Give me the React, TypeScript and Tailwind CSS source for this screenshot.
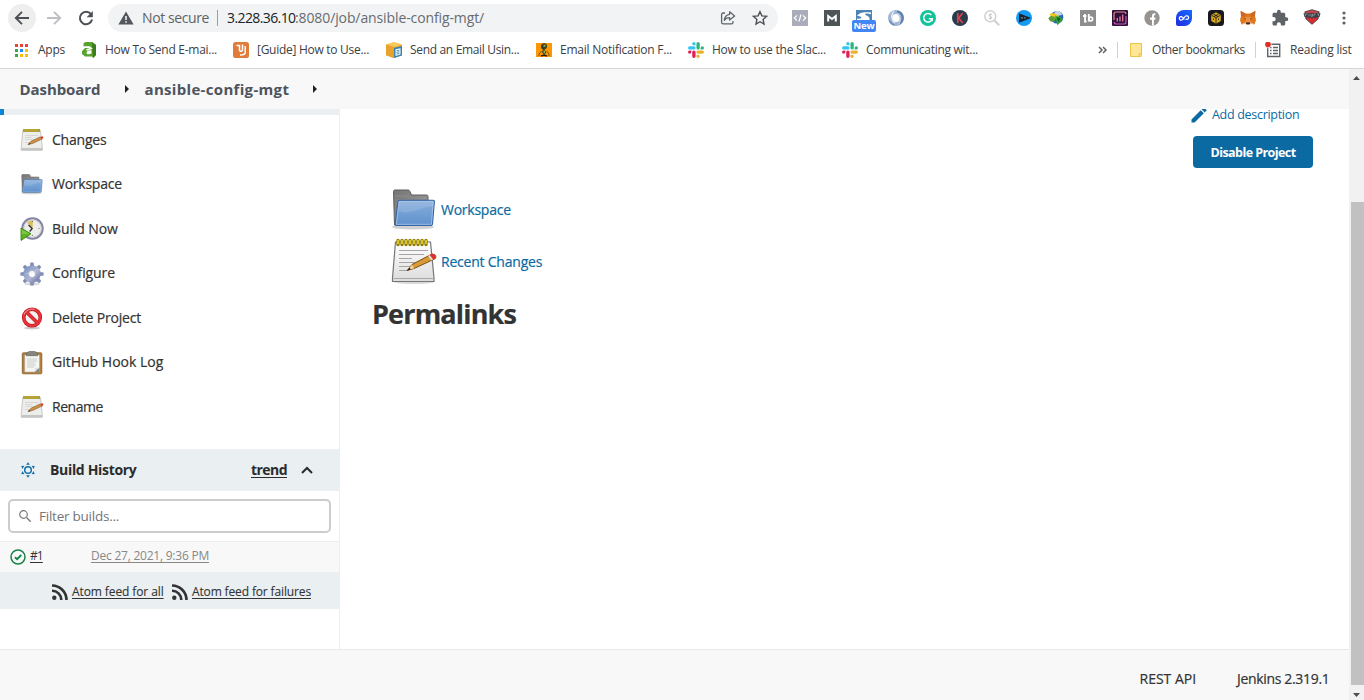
import React from "react";

type IconProps = { className?: string };

const font = "font-['Open_Sans','Noto_Sans',sans-serif]";

/* ---------- browser chrome icons ---------- */

const Back = () => (
  <svg width="16" height="16" viewBox="0 0 16 16" fill="none" stroke="#4c4f54" strokeWidth="1.9">
    <path d="M15 8H2.5M8 1.8 1.8 8 8 14.2" />
  </svg>
);
const Forward = () => (
  <svg width="16" height="16" viewBox="0 0 16 16" fill="none" stroke="#bdbfc2" strokeWidth="1.9">
    <path d="M1 8h12.5M8 1.8 14.2 8 8 14.2" />
  </svg>
);
const Reload = () => (
  <svg width="16" height="16" viewBox="0 0 16 16">
    <path d="M13 4.2A6.2 6.2 0 1 0 14.1 9.6" fill="none" stroke="#4c4f54" strokeWidth="2" />
    <path d="M14.8 1v6.2H8.6z" fill="#4c4f54" />
  </svg>
);
const Warning = () => (
  <svg width="16" height="14" viewBox="0 0 16 14">
    <path d="M8 .5 15.6 13.5H.4z" fill="#54575b" />
    <path d="M7.2 5h1.6v4H7.2zM7.2 10.2h1.6v1.6H7.2z" fill="#f1f3f4" />
  </svg>
);
const Share = () => (
  <svg width="16" height="16" viewBox="0 0 16 16" fill="none" stroke="#5f6368" strokeWidth="1.3" strokeLinejoin="round">
    <path d="M5 3H3.2C2.2 3 1.6 3.6 1.6 4.6v7.6c0 1 .6 1.6 1.6 1.6h8.2c1 0 1.6-.6 1.6-1.6V11" />
    <path d="M9.6 1.8 14.6 6l-5 4.1V7.7C7 7.7 5.4 8.6 4.3 10.4 4.6 7 6.4 4.700 9.6 4.300z" />
  </svg>
);
const Star = () => (
  <svg width="16" height="16" viewBox="0 0 16 16" fill="none" stroke="#4c4f54" strokeWidth="1.4">
    <path d="m8 1.700 1.900 4.200 4.600.5-3.400 3.100.9 4.500L8 11.700 4 14l.9-4.500L1.500 6.400l4.600-.5z" />
  </svg>
);

const CodeExt = () => (
  <svg width="16" height="16" viewBox="0 0 16 16">
    <rect width="16" height="16" fill="#a9adba" />
    <path d="M5 5.300 2.300 8 5 10.700M11 5.300 13.700 8 11 10.700M9 4.500 7 11.500" fill="none" stroke="#fff" strokeWidth="1.200" />
  </svg>
);
const MExt = () => (
  <svg width="16" height="16" viewBox="0 0 16 16">
    <rect width="16" height="16" fill="#4d5557" />
    <path d="M4.200 11.500V6L8 9l3.800-3v5.500" fill="none" stroke="#fff" strokeWidth="2" />
  </svg>
);
const WaveExt = () => (
  <svg width="16" height="16" viewBox="0 0 16 16">
    <rect width="16" height="16" fill="#4e84b5" />
    <path d="M1 6C3 3 7 1.500 15 2.500v1.800C11 3 8 3.500 9.500 5c2.500 1 4.500 2 4 5H1V8.500c3 .5 5 0 4-1.500-1-.7-2.500-1-4-1z" fill="#fff" />
  </svg>
);
const SwirlExt = () => (
  <svg width="16" height="16" viewBox="0 0 16 16" fill="none">
    <circle cx="8" cy="8" r="6" stroke="#9fb5d3" strokeWidth="4" />
    <path d="M9 1.500A6.500 6.500 0 0 1 10.500 14" stroke="#6080ac" strokeWidth="2.200" />
    <path d="M6 1.200C2.500 4.500 3 10 7 12.800" stroke="#dfe8f4" strokeWidth="1.500" />
    <path d="M10.500 14.500C13 11 12.500 6 9 3.300" stroke="#c8d6ea" strokeWidth="1.300" />
    <path d="M1.500 10.500A7 7 0 0 0 6.500 15" stroke="#6c8bb5" strokeWidth="1.400" />
  </svg>
);
const GrammarExt = () => (
  <svg width="16" height="16" viewBox="0 0 16 16">
    <circle cx="8" cy="8" r="8" fill="#15c39a" />
    <path d="M11.300 5A4.300 4.300 0 1 0 12.200 8.700H8.800M12.200 8.500V11.300" fill="none" stroke="#fff" strokeWidth="1.500" />
  </svg>
);
const KExt = () => (
  <svg width="16" height="16" viewBox="0 0 16 16">
    <circle cx="8" cy="8" r="8" fill="#2a3b4c" />
    <path d="M5.800 3v10M10.700 3 6.700 8l4 5" fill="none" stroke="#d9444a" strokeWidth="1.700" />
  </svg>
);
const MoneySearchExt = () => (
  <svg width="16" height="16" viewBox="0 0 16 16" fill="none" stroke="#cfcfcf">
    <circle cx="6.300" cy="6.300" r="5.500" strokeWidth="1.400" />
    <path d="m10.500 10.500 4.700 4.700" strokeWidth="2" />
    <path d="M8 4.600C6 3.300 4.300 5.200 6 6.200c2.600.8 2 3.200-1.500 2M6.300 3v6.700" strokeWidth="1.100" />
  </svg>
);
const PlayExt = () => (
  <svg width="16" height="16" viewBox="0 0 16 16">
    <circle cx="8" cy="8" r="8" fill="#149bf3" />
    <path d="M3 3.300 15 8 3 12.700z" fill="#15242f" />
    <path d="M5 7h2v1.700H5zM8 7h1.500v1.700H8z" fill="#55707f" />
  </svg>
);
const GlobeExt = () => (
  <svg width="16" height="16" viewBox="0 0 16 16">
    <circle cx="9" cy="7.300" r="6.300" fill="#2768b3" />
    <path d="M7 1.500C10 0 14 2 14 5L9 6 6 4z" fill="#c5d5e5" />
    <path d="M1.500 4.500C4 2 8 3 11 7L6 9z" fill="#f5c51c" />
    <path d="M.5 8.500C2 5 5 5.500 8 8l-2 4C3 12 1 11 .5 8.500z" fill="#5f9d36" />
    <path d="M7 5.500 15 8.500 9.500 15.500z" fill="#30a52c" />
    <path d="m9 7 3.500 1.700L10 12z" fill="#175a18" />
  </svg>
);
const TbExt = () => (
  <svg width="16" height="16" viewBox="0 0 16 16">
    <rect width="16" height="16" fill="#8e8e8e" />
    <path d="M5 4v7.500h1.500M3 6h3.500M8.800 4v7.500" fill="none" stroke="#fff" strokeWidth="1.800" />
    <circle cx="10.700" cy="9" r="1.900" fill="none" stroke="#fff" strokeWidth="1.600" />
  </svg>
);
const ChartExt = () => (
  <svg width="16" height="16" viewBox="0 0 16 16" fill="none">
    <rect width="16" height="16" rx="1" fill="#30123f" />
    <path d="M13.800 4V3.500c0-1-.5-1.500-1.500-1.500H4C2.800 2 2 2.800 2 4v6" stroke="#e78c83" strokeWidth="1.200" />
    <path d="M2.200 12c0 1.200.7 2 1.800 2h8c1.200 0 2-.8 2-2V6" stroke="#c559b0" strokeWidth="1.200" />
    <path d="M5.300 8v3.500M8 6.500v5M10.700 4.500v7" stroke="#db7599" strokeWidth="1.400" />
  </svg>
);
const FExt = () => (
  <svg width="16" height="16" viewBox="0 0 16 16">
    <circle cx="8" cy="8" r="7.700" fill="#969391" />
    <path d="M8 15.500V9.700H6V7.500h2V6c0-2 1-3 3.300-2.700v1.900C10 5 9.900 5.400 9.900 6.200v1.300h1.600l-.3 2.200H9.900v5.600z" fill="#fff" />
  </svg>
);
const LoopExt = () => (
  <svg width="16" height="16" viewBox="0 0 16 16">
    <defs>
      <linearGradient id="loop" x1="0" y1="1" x2="1" y2="0"><stop stopColor="#202bde" /><stop offset="1" stopColor="#176cff" /></linearGradient>
    </defs>
    <path d="M8 0h8v8.500A7.500 7.500 0 0 1 8.500 16H2a2 2 0 0 1-2-2V8a8 8 0 0 1 8-8z" fill="url(#loop)" />
    <path d="M8.300 9.500 6.600 7.300C5.500 6 3.300 6.500 3.300 8.300c0 2 2.200 2.400 3.300 1L9 6.600c1.200-1.500 3.600-.9 3.600 1 0 1.700-1.900 2.400-3 1.200" fill="none" stroke="#fff" strokeWidth="1.200" />
  </svg>
);
const CubeExt = () => (
  <svg width="16" height="16" viewBox="0 0 16 16">
    <rect width="16" height="16" rx="3.500" fill="#17191e" />
    <path d="m8 2.300 4.800 2.600v6L8 13.700l-4.800-2.800v-6z" fill="#d7a619" />
    <path d="M8 7v7M3.500 5.300 8 7.600l4.500-2.300M5.600 4.200l4.800 2.500M10.400 4.200 5.600 6.700M5.500 8.500v1.500M10.500 8.500v1.500" stroke="#17191e" strokeWidth=".8" fill="none" />
  </svg>
);
const FoxExt = () => (
  <svg width="16" height="16" viewBox="0 0 16 16">
    <path d="m.5.800 5.300 2.700h4.400L15.500.800 15 6l1 4-1.500 4.500-4-1-1 1h-3l-1-1-4 1L0 10l1-4z" fill="#e2761b" />
    <path d="m.8 1 5 3.300L5 7 1 6zM15.200 1l-5 3.300L11 7l4-1z" fill="#c8682a" />
    <path d="M5 7h6l-1 5H6z" fill="#ef9044" />
    <path d="m4 8.300 2 .2-.3 1zM12 8.300l-2 .2.3 1z" fill="#233447" />
    <path d="M6.300 12.500h3.400l.2 1.800H6.100z" fill="#322a2a" />
    <path d="m2 14 3.500-2 .5 2zM14 14l-3.500-2-.5 2z" fill="#d5bfb2" />
  </svg>
);
const PuzzleExt = () => (
  <svg width="18" height="18" viewBox="0 0 24 24" fill="#5f6368">
    <path d="M20.500 11H19V7c0-1.100-.9-2-2-2h-4V3.500a2.500 2.500 0 0 0-5 0V5H4c-1.100 0-1.990.9-1.990 2v3.800H3.500c1.490 0 2.700 1.210 2.700 2.700s-1.210 2.700-2.700 2.700H2V20c0 1.100.9 2 2 2h3.800v-1.500c0-1.490 1.210-2.700 2.700-2.700s2.700 1.210 2.700 2.700V22H17c1.100 0 2-.9 2-2v-4h1.500a2.500 2.500 0 0 0 0-5z" />
  </svg>
);
const ShieldExt = () => (
  <svg className="mb-[3px]" width="18" height="16" viewBox="0 0 18 16">
    <path d="M1.500 2.500 9 .3l7.500 2.200-1 7.500L9 15.800 2.500 10z" fill="#3c4349" />
    <path d="m3 8 6 1.300L15 8l-1 2.700L9 15l-5-4.300z" fill="#d22f35" />
    <path d="M3 2.800 9 1l6 1.800v1.500H3z" fill="#c9454a" />
    <path d="M.5 4.300h17L16.500 8 9 8.800 1.500 8z" fill="#394047" />
    <path d="M2.500 7V5h2M6 7.300V5M8 5v2.300h1.500V5M11 7.300V5h1.500M14 5h1.500v2" stroke="#a7abb0" strokeWidth=".7" fill="none" />
  </svg>
);

const extensions: React.FC[] = [
  CodeExt, MExt, WaveExt, SwirlExt, GrammarExt, KExt, MoneySearchExt, PlayExt, GlobeExt,
  TbExt, ChartExt, FExt, LoopExt, CubeExt, FoxExt, PuzzleExt, ShieldExt,
];

/* ---------- bookmark icons ---------- */

const AppsGrid = () => {
  const colors = ["#ea4335", "#ea4335", "#ea4335", "#34a853", "#1a8cff", "#fbbc04", "#34a853", "#fbbc04", "#fbbc04"];
  return (
    <svg width="13" height="13" viewBox="0 0 13 13">
      {colors.map((c, i) => (
        <rect key={i} x={(i % 3) * 5} y={Math.floor(i / 3) * 5} width="3" height="3" fill={c} />
      ))}
    </svg>
  );
};
const GreenTwo = () => (
  <svg width="16" height="16" viewBox="0 0 16 16">
    <path d="M1.500 1.200 3.500 0h6.800L14 3v10l-3 3-1-1.500H3L0 12V9l3-3H1.500z" fill="#57a32b" />
    <path d="M10 .5 14 3v10l-3 3z" fill="#3a7d1c" />
    <path d="M1 5.200h6.500L9 6.500 4.500 8" fill="none" stroke="#fff" strokeWidth="1.800" />
    <path d="M9.500 8.500C7 8 4.500 9 4.500 10.700s2.500 2 5 .8z" fill="#fff" />
  </svg>
);
const OrangeGuide = () => (
  <svg width="16" height="16" viewBox="0 0 16 16">
    <rect width="16" height="16" rx="2.500" fill="#e07b39" />
    <path d="M3.500 3.500h3v5.300M9.500 2.500v5.800c0 .8-.8 1-3 1M12.200 4v6.500c0 1.800-1 2.500-5.200 2.500" fill="none" stroke="#fff" strokeWidth="1.500" />
  </svg>
);
const BoxIcon = () => (
  <svg width="16" height="16" viewBox="0 0 16 16">
    <path d="m0 2.500 8-2.300 8 2.300v10.700L8 16l-8-2.800z" fill="#f2b02f" />
    <path d="m0 2.500 8-2.300 8 2.300-8 2.600z" fill="#f8c95d" />
    <path d="M0 2.500 8 5v11l-8-2.800z" fill="#e9a22b" />
    <path d="m8 5.800 8-1.800v9.500L8 16z" fill="#3883ae" />
    <path d="m9.500 7.300 5-1v6.200l-5 1.500z" fill="#fff" />
    <path d="m10.500 8.700 3-.6M10.500 10.400l3-.6M10.500 12.100l3-.7" stroke="#3883ae" strokeWidth=".9" />
  </svg>
);
const BugIcon = () => (
  <svg width="16" height="16" viewBox="0 0 16 16">
    <rect y="1" width="16" height="14" fill="#ff9800" />
    <path d="m5.500 9-2.500 3v2M10.500 9l2.500 3v2" stroke="#7b5313" strokeWidth="1" fill="none" />
    <path d="M5 4.500C5 2.500 6.500 1.300 8.300 1.300s2.700 1.200 2.700 3-1 2.700-2.500 3l1.700 3.200L8 13.500 6 10l1-2.500C5.500 7 5 6 5 4.500z" fill="#33401d" />
    <path d="M7.500 2.700h2v2h-2zM7.500 8.500H9v2.700H7.500z" fill="#91b456" />
    <path d="M5 14.300c1-1.300 5-1.300 6 0" stroke="#1e1a0d" strokeWidth="1.400" fill="none" />
  </svg>
);
const Slack = () => (
  <svg width="16" height="16" viewBox="0 0 24 24">
    <path d="M5.042 15.165a2.528 2.528 0 0 1-2.520 2.523A2.528 2.528 0 0 1 0 15.165a2.527 2.527 0 0 1 2.522-2.520h2.520v2.520zM6.313 15.165a2.527 2.527 0 0 1 2.521-2.520 2.527 2.527 0 0 1 2.521 2.520v6.313A2.528 2.528 0 0 1 8.834 24a2.528 2.528 0 0 1-2.521-2.522v-6.313z" fill="#e01e5a" />
    <path d="M8.834 5.042a2.528 2.528 0 0 1-2.521-2.520A2.528 2.528 0 0 1 8.834 0a2.528 2.528 0 0 1 2.521 2.522v2.520H8.834zM8.834 6.313a2.528 2.528 0 0 1 2.521 2.521 2.528 2.528 0 0 1-2.521 2.521H2.522A2.528 2.528 0 0 1 0 8.834a2.528 2.528 0 0 1 2.522-2.521h6.312z" fill="#36c5f0" />
    <path d="M18.956 8.834a2.528 2.528 0 0 1 2.522-2.521A2.528 2.528 0 0 1 24 8.834a2.528 2.528 0 0 1-2.522 2.521h-2.522V8.834zM17.688 8.834a2.528 2.528 0 0 1-2.523 2.521 2.527 2.527 0 0 1-2.520-2.521V2.522A2.527 2.527 0 0 1 15.165 0a2.528 2.528 0 0 1 2.523 2.522v6.312z" fill="#2eb67d" />
    <path d="M15.165 18.956a2.528 2.528 0 0 1 2.523 2.522A2.528 2.528 0 0 1 15.165 24a2.527 2.527 0 0 1-2.520-2.522v-2.522h2.520zM15.165 17.688a2.527 2.527 0 0 1-2.520-2.523 2.526 2.526 0 0 1 2.520-2.520h6.313A2.527 2.527 0 0 1 24 15.165a2.528 2.528 0 0 1-2.522 2.523h-6.313z" fill="#ecb22e" />
  </svg>
);

const bookmarks: { icon: React.FC; label: string; slot: string; text: string }[] = [
  { icon: AppsGrid, label: "Apps", slot: "w-[67px] gap-[10px]", text: "tracking-[-0.25px]" },
  { icon: GreenTwo, label: "How To Send E-mai...", slot: "w-[151px] gap-[7px]", text: "tracking-[-0.27px]" },
  { icon: OrangeGuide, label: "[Guide] How to Use...", slot: "w-[153px] gap-2", text: "tracking-[-0.28px]" },
  { icon: BoxIcon, label: "Send an Email Usin...", slot: "w-[150px] gap-2", text: "tracking-[-0.33px]" },
  { icon: BugIcon, label: "Email Notification F...", slot: "w-[152px] gap-2", text: "tracking-[-0.23px]" },
  { icon: Slack, label: "How to use the Slac...", slot: "w-[154px] gap-2", text: "tracking-[-0.23px]" },
  { icon: Slack, label: "Communicating wit...", slot: "w-[160px] gap-2", text: "tracking-[-0.28px]" },
];

/* ---------- page icons ---------- */

const Notepad = ({ className }: IconProps) => (
  <svg className={className} viewBox="0 0 48 48">
    <defs>
      <linearGradient id="paper" x1="0" y1="0" x2="0" y2="1"><stop stopColor="#fff" /><stop offset="1" stopColor="#dcdcdc" /></linearGradient>
    </defs>
    <ellipse cx="24" cy="45" rx="20" ry="2" fill="#000" opacity=".15" />
    <path d="M5.500 5h35L44 41v3.500H2.500V41z" fill="url(#paper)" stroke="#777" strokeWidth="1.200" />
    <path d="M3.500 41.500h40" stroke="#aaa" />
    <path d="M9 13.500h29M9 17.500h25M9 21.500h13M9 25.500h17M9 29.500h14M9 33.500h9" stroke="#a5a5a5" strokeWidth="1.200" />
    <path d="M8 3.500v4M12 3.500v4M16 3.500v4M20 3.500v4M24 3.500v4M28 3.500v4M32 3.500v4M36 3.500v4" stroke="#8d7900" strokeWidth="3.400" strokeLinecap="round" />
    <path d="M8 3.500v3M12 3.500v3M16 3.500v3M20 3.500v3M24 3.500v3M28 3.500v3M32 3.500v3M36 3.500v3" stroke="#f3e12e" strokeWidth="1.500" strokeLinecap="round" />
    <path d="m17 33.500 5-6 19-10c3-1.300 6.500 2 4 4.300L24 31.500z" fill="#d99a35" stroke="#7d4e13" strokeWidth="1" />
    <path d="m22 27.700 2.300 3.500-7.300 2.300z" fill="#efcf9b" />
    <path d="m19.500 30.700-2.700 3 4-1.200z" fill="#222" />
    <path d="m39.500 18.200 2-1.100c3-1.300 6 2 3.700 4.200L43 22.800z" fill="#e03131" />
    <path d="m38 19 1.700-1 3.400 4.600-1.800 1z" fill="#ddd" />
  </svg>
);
const SmallNotepad = ({ className }: IconProps) => (
  <svg className={className} viewBox="0 0 24 24">
    <path d="M2.800 2.500h17.700L22.300 20v2.300H1.200V20z" fill="#ededeb" stroke="#b5b5b3" strokeWidth=".7" />
    <path d="M1.500 20h20.500v2.200H1.500z" fill="#c5c5c4" />
    <path d="M3 1h17v3H3z" fill="#a99a2c" />
    <path d="M4 1.200v2.500M6 1.200v2.500M8 1.200v2.500M10 1.200v2.500M12 1.200v2.500M14 1.200v2.500M16 1.200v2.500M18 1.200v2.500" stroke="#c9bd52" strokeWidth=".7" />
    <path d="M5 7.500h13M5 9.500h7M5 11.500h9M5 14.500h4" stroke="#d0d0d0" strokeWidth=".8" />
    <path d="m8 16.500 3-3.200 9-4.300 2.500 1.800-10 4.700z" fill="#cf9348" stroke="#835525" strokeWidth=".6" />
    <path d="m8 16.700 1.500-1.600 1 1z" fill="#332a20" />
    <path d="m20 9.100 1.500-.7c1.500-.5 2.500 1 1.300 2l-1 .7z" fill="#e03a32" />
  </svg>
);
const Folder = ({ className }: IconProps) => (
  <svg className={className} viewBox="0 0 48 48">
    <defs>
      <linearGradient id="fold" x1="0" y1="0" x2="0" y2="1"><stop stopColor="#87aedb" /><stop offset="1" stopColor="#5f91cd" /></linearGradient>
      <linearGradient id="foldBack" x1="0" y1="0" x2="1" y2="1"><stop stopColor="#737373" /><stop offset="1" stopColor="#a8a8a8" /></linearGradient>
    </defs>
    <ellipse cx="23" cy="40" rx="21" ry="2.500" fill="#000" opacity=".18" />
    <path d="M3.500 4.500c0-1 .5-1.500 1.500-1.500h13c1 0 1.500.5 2 1.500l1.500 3.500h15c1 0 1.500.5 1.500 1.500V38H4.500z" fill="url(#foldBack)" stroke="#5e5e5e" strokeWidth="1" />
    <path d="M5 9h14M5 13h30M5 17h4" stroke="#8b8b8b" />
    <path d="M8 14.500c0-.8.500-1.300 1.300-1.300H43c1 0 1.500.6 1.400 1.500L42.500 37c-.1.900-.6 1.500-1.500 1.500H6.500c-.9 0-1.500-.5-1.400-1.400z" fill="url(#fold)" stroke="#3465a4" strokeWidth="1.100" />
    <path d="M9.200 14.500h34L41.400 37.300H6.300z" fill="none" stroke="#a7c4e7" strokeWidth=".8" />
    <path d="M9 24c12 5 19-4 34-4.500l.4-5H9z" fill="#fff" opacity=".13" />
  </svg>
);
const BuildNow = ({ className }: IconProps) => (
  <svg className={className} viewBox="0 0 24 24">
    <circle cx="12.500" cy="11.500" r="10.200" fill="#ecece8" stroke="#8484a3" strokeWidth="2" />
    <circle cx="12.500" cy="11.500" r="8.700" fill="none" stroke="#c9c9cf" strokeWidth=".8" />
    <path d="M12.500 11.500 7 5.500C9 3.500 11 3.300 13 3.500z" fill="#d9be63" />
    <path d="m8.500 8 3.700 3.500-2.500 3" stroke="#26262a" strokeWidth="1.200" fill="none" />
    <path d="M12.500 4v1M19.500 11.500h-1M12.500 19v-1" stroke="#777" />
    <path d="M1 11v12.500l10-6.700z" fill="#5cb31c" stroke="#318207" strokeWidth=".8" />
    <path d="M1.600 12.200v5l7.800-.4z" fill="#8fd45b" opacity=".6" />
  </svg>
);
const Gear = ({ className }: IconProps) => (
  <svg className={className} viewBox="0 0 24 24">
    <defs>
      <linearGradient id="gear" x1="0" y1="0" x2="1" y2="1"><stop stopColor="#8399c4" /><stop offset=".6" stopColor="#b0b4d3" /><stop offset="1" stopColor="#7b82aa" /></linearGradient>
    </defs>
    <ellipse cx="12" cy="22" rx="8" ry="1.500" fill="#000" opacity=".15" />
    <g fill="#7f8db5">
      {[0, 45, 90, 135, 180, 225, 270, 315].map((a) => (
        <path key={a} d="m10 4 .4-3.600h3.200L14 4z" transform={`rotate(${a} 12 12)`} />
      ))}
    </g>
    <circle cx="12" cy="12" r="6.200" fill="none" stroke="url(#gear)" strokeWidth="5" />
    <circle cx="12" cy="12" r="3.500" fill="none" stroke="#7b89b0" strokeWidth=".6" />
    <path d="M5 12c4-2 8 1 12-5" stroke="#d5ddf0" strokeWidth=".8" opacity=".6" fill="none" />
  </svg>
);
const NoEntry = ({ className }: IconProps) => (
  <svg className={className} viewBox="0 0 24 24">
    <ellipse cx="12" cy="22" rx="8" ry="1.500" fill="#000" opacity=".2" />
    <circle cx="12" cy="11.500" r="8.300" fill="#f4f1f1" stroke="#c4161c" strokeWidth="3.600" />
    <path d="m6.200 5.700 11.600 11.600" stroke="#c4161c" strokeWidth="3.600" />
    <circle cx="12" cy="11.500" r="8.300" fill="none" stroke="#e5343a" strokeWidth="2.300" />
    <path d="m6.200 5.700 11.600 11.600" stroke="#e5343a" strokeWidth="2.300" />
    <path d="M4 8.500c1.500-4 6-6.300 10.500-5" stroke="#f6a1a2" strokeWidth=".9" fill="none" />
  </svg>
);
const Clipboard = ({ className }: IconProps) => (
  <svg className={className} viewBox="0 0 24 24">
    <rect x="2.300" y="1.800" width="19.500" height="21" rx="1" fill="#b37f3b" stroke="#85581f" strokeWidth=".8" />
    <path d="M4.700 4h14.800v17H4.700z" fill="#f5f5f3" stroke="#aaa" strokeWidth=".5" />
    <path d="M8.500.8C9 0 15 0 15.500.8l2 1.500v2.400h-11V2.300z" fill="#85877f" stroke="#5c5e58" strokeWidth=".6" />
    <path d="M7 8h10M7 10h10M7 12h8M7 14h9M7 16h7" stroke="#c8c8c8" strokeWidth=".9" />
    <path d="M19.500 16.500V21H14.500z" fill="#84847e" />
    <path d="m14.500 21 .6-4 4.400-.5z" fill="#ddd" />
  </svg>
);
const Pencil = () => (
  <svg width="20" height="20" viewBox="0 0 24 24" fill="#0b6aa2" className="-ml-px shrink-0">
    <path d="M3 17.250V21h3.750L17.810 9.940l-3.750-3.750L3 17.250zM20.710 7.040a1 1 0 0 0 0-1.410l-2.340-2.340a1 1 0 0 0-1.410 0l-1.830 1.830 3.750 3.750 1.830-1.830z" />
  </svg>
);
const SunGear = () => (
  <svg width="16" height="16" viewBox="0 0 16 16" fill="#1271a8">
    <circle cx="8" cy="8" r="3.300" fill="none" stroke="#1271a8" strokeWidth="1.500" />
    {[0, 60, 120, 180, 240, 300].map((a) => (
      <path key={a} d="M8 .2 9.900 2.700H6.100z" transform={`rotate(${a} 8 8)`} />
    ))}
  </svg>
);
const Rss = () => (
  <svg width="16" height="16" viewBox="0 0 16 16" className="mt-[2px]">
    <circle cx="2.300" cy="13.700" r="2.200" fill="#333" />
    <path d="M0 6.700A9.200 9.200 0 0 1 9.300 16M0 1.500A14.500 14.500 0 0 1 14.500 16" fill="none" stroke="#333" strokeWidth="2.600" />
  </svg>
);
const Success = () => (
  <svg width="16" height="16" viewBox="0 0 16 16" fill="none" stroke="#138347">
    <circle cx="8" cy="8" r="7" strokeWidth="1.500" />
    <path d="m5 8.200 2.100 2L11.300 6" strokeWidth="1.900" />
  </svg>
);
const Caret = () => (
  <svg width="4" height="8" viewBox="0 0 4 8" fill="#222"><path d="m0 0 4 4-4 4z" /></svg>
);

const tasks: { icon: React.FC<IconProps>; label: string; text: string }[] = [
  { icon: SmallNotepad, label: "Changes", text: "tracking-[-0.2px]" },
  { icon: Folder, label: "Workspace", text: "tracking-[-0.25px]" },
  { icon: BuildNow, label: "Build Now", text: "tracking-[-0.1px]" },
  { icon: Gear, label: "Configure", text: "tracking-[-0.1px]" },
  { icon: NoEntry, label: "Delete Project", text: "tracking-[-0.18px]" },
  { icon: Clipboard, label: "GitHub Hook Log", text: "tracking-[0px]" },
  { icon: SmallNotepad, label: "Rename", text: "tracking-[-0.45px]" },
];

function BrowserChrome() {
  return (
    <header className="h-[69px] shrink-0 border-b border-[#d5d7da] bg-white">
      <div className="flex h-9 items-center">
        <div className="flex w-[108px] shrink-0 items-center pl-2">
          <div className="flex size-7 items-center justify-center rounded-full bg-[#eeeeef]"><Back /></div>
          <div className="ml-[10px]"><Forward /></div>
          <div className="ml-4"><Reload /></div>
        </div>
        <div className="flex h-7 w-[670px] shrink-0 items-center rounded-full bg-[#f1f3f4] pr-[10px] pl-[10px] text-[14px]">
          <Warning />
          <span className="-mt-px ml-2 w-[75px] tracking-[-0.4px] text-[#5f6368]">Not secure</span>
          <span className="mr-[9px] h-4 w-px bg-[#9b9ea2]" />
          <span className="-mt-px w-[68px] tracking-[-0.6px] text-[#202124]">3.228.36.10</span>
          <span className="-mt-px flex-1 tracking-[-0.11px] text-[#686c71]">:8080/job/ansible-config-mgt/</span>
          <Share />
          <span className="ml-4"><Star /></span>
        </div>
        <div className="ml-[6px] flex shrink-0">
          {extensions.map((Ext, i) => (
            <div key={i} className="relative flex h-7 w-8 items-center justify-center">
              <Ext />
              {i === 2 && (
                <span className="absolute top-4 left-1 flex h-3 w-6 items-center justify-center rounded-[2px] bg-[#4285f4] text-[9.500px] font-bold tracking-[-0.2px] text-white">New</span>
              )}
            </div>
          ))}
          <div className="flex h-7 w-8 items-center justify-center">
            <svg width="4" height="14" viewBox="0 0 4 14" fill="#5f6368"><circle cx="2" cy="2" r="1.600" /><circle cx="2" cy="7" r="1.600" /><circle cx="2" cy="12" r="1.600" /></svg>
          </div>
        </div>
      </div>
      <div className="flex h-[28px] items-center pl-[15px] text-[12px] text-[#3c4043]">
        {bookmarks.map(({ icon: Icon, label, slot, text }) => (
          <div key={label} className={"flex shrink-0 items-center " + slot}>
            <Icon />
            <span className={"whitespace-nowrap " + text}>{label}</span>
          </div>
        ))}
        <div className="ml-[96px] w-[19px] shrink-0">
          <svg width="10" height="8" viewBox="0 0 10 8" fill="none" stroke="#5f6368" strokeWidth="1.500"><path d="m1 1 3 3-3 3M5 1l3 3-3 3" /></svg>
        </div>
        <span className="h-4 w-px shrink-0 bg-[#cfd1d4]" />
        <svg className="ml-3 shrink-0" width="12" height="14" viewBox="0 0 12 14"><path d="M.5.500h11v10h-1v3H.5z" fill="#ffe695" stroke="#e9c34a" /><path d="M9 13.500v-3h2.500v3z" fill="#f6d667" stroke="#e9c34a" strokeWidth=".6" /></svg>
        <span className="ml-[10px] w-[103px] shrink-0 tracking-[-0.37px]">Other bookmarks</span>
        <span className="h-4 w-px shrink-0 bg-[#cfd1d4]" />
        <svg className="ml-[9px] shrink-0" width="16" height="16" viewBox="0 0 16 16" fill="none">
          <path d="M2.700 2.200h12v12.300h-12z" stroke="#5f6368" strokeWidth="1.400" />
          <path d="M5 5.500h1.500M8 5.500h5M5 8.500h1.500M8 8.500h5M5 11.500h1.500M8 11.500h5" stroke="#5f6368" strokeWidth="1.300" />
          <circle cx="3" cy="2.500" r="3.300" fill="#d93025" stroke="#fff" strokeWidth=".7" />
        </svg>
        <span className="ml-[9px] whitespace-nowrap tracking-[-0.22px]">Reading list</span>
      </div>
    </header>
  );
}

function Sidebar() {
  return (
    <aside className="w-[340px] shrink-0 border-r border-[#eaeff2]">
      <div className="h-[6px] border-l-4 border-[#0b84d6] bg-[#eaeff2]" />
      <nav className="flex flex-col pt-[3px]">
        {tasks.map(({ icon: Icon, label, text }) => (
          <div key={label} className="flex h-[44.5px] items-center gap-2 pl-5 text-[14px] text-[#333] [-webkit-text-stroke:0.2px]">
            <Icon className="size-6" />
            <span className={"-mt-[2px] " + text}>{label}</span>
          </div>
        ))}
      </nav>
      <section className="mt-[19.500px]">
        <div className="flex h-[42px] items-center bg-[#eaeff2] pl-5 text-[14px] font-bold text-[#2b2b2b]">
          <SunGear />
          <span className="-mt-[2px] ml-[14px] w-[201px] tracking-[-0.32px]">Build History</span>
          <span className="-mt-[2px] w-[50px] tracking-[-0.56px] underline underline-offset-2">trend</span>
          <svg width="12" height="8" viewBox="0 0 12 8" fill="none" stroke="#2b2b2b" strokeWidth="2"><path d="m1 7 5-5 5 5" /></svg>
        </div>
        <div className="px-2 py-2">
          <div className="flex h-[34px] items-center rounded-[5px] border-2 border-[#ccc] pl-2 text-[13.500px] text-[#757575]">
            <svg width="14" height="14" viewBox="0 0 14 14" fill="none" stroke="#777"><circle cx="5.500" cy="5.500" r="3.800" strokeWidth="1.200" /><path d="m8.500 8.500 4.200 4.200" strokeWidth="1.300" /></svg>
            <span className="ml-[7px] tracking-[-0.24px]">Filter builds...</span>
          </div>
        </div>
        <div className="flex h-[31px] items-center border-t border-[#eaeff2] bg-[#f8f8f8] pl-[10px] text-[12px]">
          <Success />
          <span className="-mt-[2px] ml-1 w-[61px] text-[#333]"><span className="inline-block tracking-[-0.9px] underline underline-offset-2">#1</span></span>
          <span className="-mt-[2px] tracking-[-0.23px] text-[#888] underline underline-offset-2">Dec 27, 2021, 9:36 PM</span>
        </div>
        <div className="flex h-[37px] items-center bg-[#eaeff2] pl-[52px] text-[12px] text-[#333] [-webkit-text-stroke:0.1px]">
          <Rss />
          <span className="mt-[2px] ml-1 w-[100px] tracking-[-0.1px] underline underline-offset-2">Atom feed for all</span>
          <Rss />
          <span className="mt-[2px] ml-1 tracking-[-0.14px] underline underline-offset-2">Atom feed for failures</span>
        </div>
      </section>
    </aside>
  );
}

function MainPanel() {
  return (
    <main className="flex-1 overflow-hidden text-[#0b6aa2]">
      <div className="flex flex-col items-end pr-9">
        <div className="flex h-3 w-[123px] items-center text-[12.500px]">
          <Pencil />
          <span className="ml-[3px] leading-[12px] whitespace-nowrap tracking-[-0.3px]">Add description</span>
        </div>
        <button className="mt-[15px] h-8 w-[120px] rounded-[4px] bg-[#0b6aa2] pt-[2px] text-[12.500px] font-bold tracking-[-0.56px] text-white">Disable Project</button>
      </div>
      <div className="mt-4 pl-8 text-[14px] [-webkit-text-stroke:0.2px]">
        <div className="flex h-[52px] items-center pl-[18px]">
          <Folder className="mt-[2px] size-12" />
          <span className="-mt-[2px] ml-[3px] tracking-[-0.25px]">Workspace</span>
        </div>
        <div className="flex h-[52px] items-center pl-[18px]">
          <Notepad className="-mt-[3px] size-12" />
          <span className="-mt-[2px] ml-[3px] tracking-[-0.22px]">Recent Changes</span>
        </div>
        <h1 className="mt-2 text-[27px] leading-[36px] font-bold tracking-[-0.83px] text-[#333]">Permalinks</h1>
      </div>
    </main>
  );
}

export default function App() {
  return (
    <div className={"flex h-[700px] w-[1364px] flex-col overflow-hidden bg-white " + font}>
      <BrowserChrome />
      <div className="flex min-h-0 flex-1">
        <div className="flex w-[1349px] flex-col">
          <div className="flex h-10 shrink-0 items-center bg-[#f8f8f8] pl-[19.500px] text-[15px] font-bold text-[#4d545d]">
            <span className="w-[105px] tracking-[-0.07px]">Dashboard</span>
            <Caret />
            <span className="ml-4 w-[168.500px] tracking-[0.32px]">ansible-config-mgt</span>
            <Caret />
          </div>
          <div className="flex h-[540px] shrink-0">
            <Sidebar />
            <MainPanel />
          </div>
          <footer className="flex h-[51px] shrink-0 items-center justify-end border-t border-[#e9e9e9] bg-[#f8f8f8] pt-[7px] pr-[18px] text-[14px] text-[#333] [-webkit-text-stroke:0.2px]">
            <span className="w-[97.500px]">REST API</span>
            <span className="w-[94px] whitespace-nowrap tracking-[-0.33px]">Jenkins 2.319.1</span>
          </footer>
        </div>
        <div className="flex w-[15px] flex-col items-center bg-[#f1f1f1]">
          <svg className="mt-[7px]" width="7" height="4" viewBox="0 0 7 4" fill="#4d4d4d"><path d="M3.500 0 7 4H0z" /></svg>
          <div className="mt-[122px] ml-[2px] h-[483px] w-[13px] bg-[#c1c1c1]" />
          <svg className="mt-2" width="7" height="4" viewBox="0 0 7 4" fill="#4d4d4d"><path d="M3.500 4 0 0h7z" /></svg>
        </div>
      </div>
    </div>
  );
}
